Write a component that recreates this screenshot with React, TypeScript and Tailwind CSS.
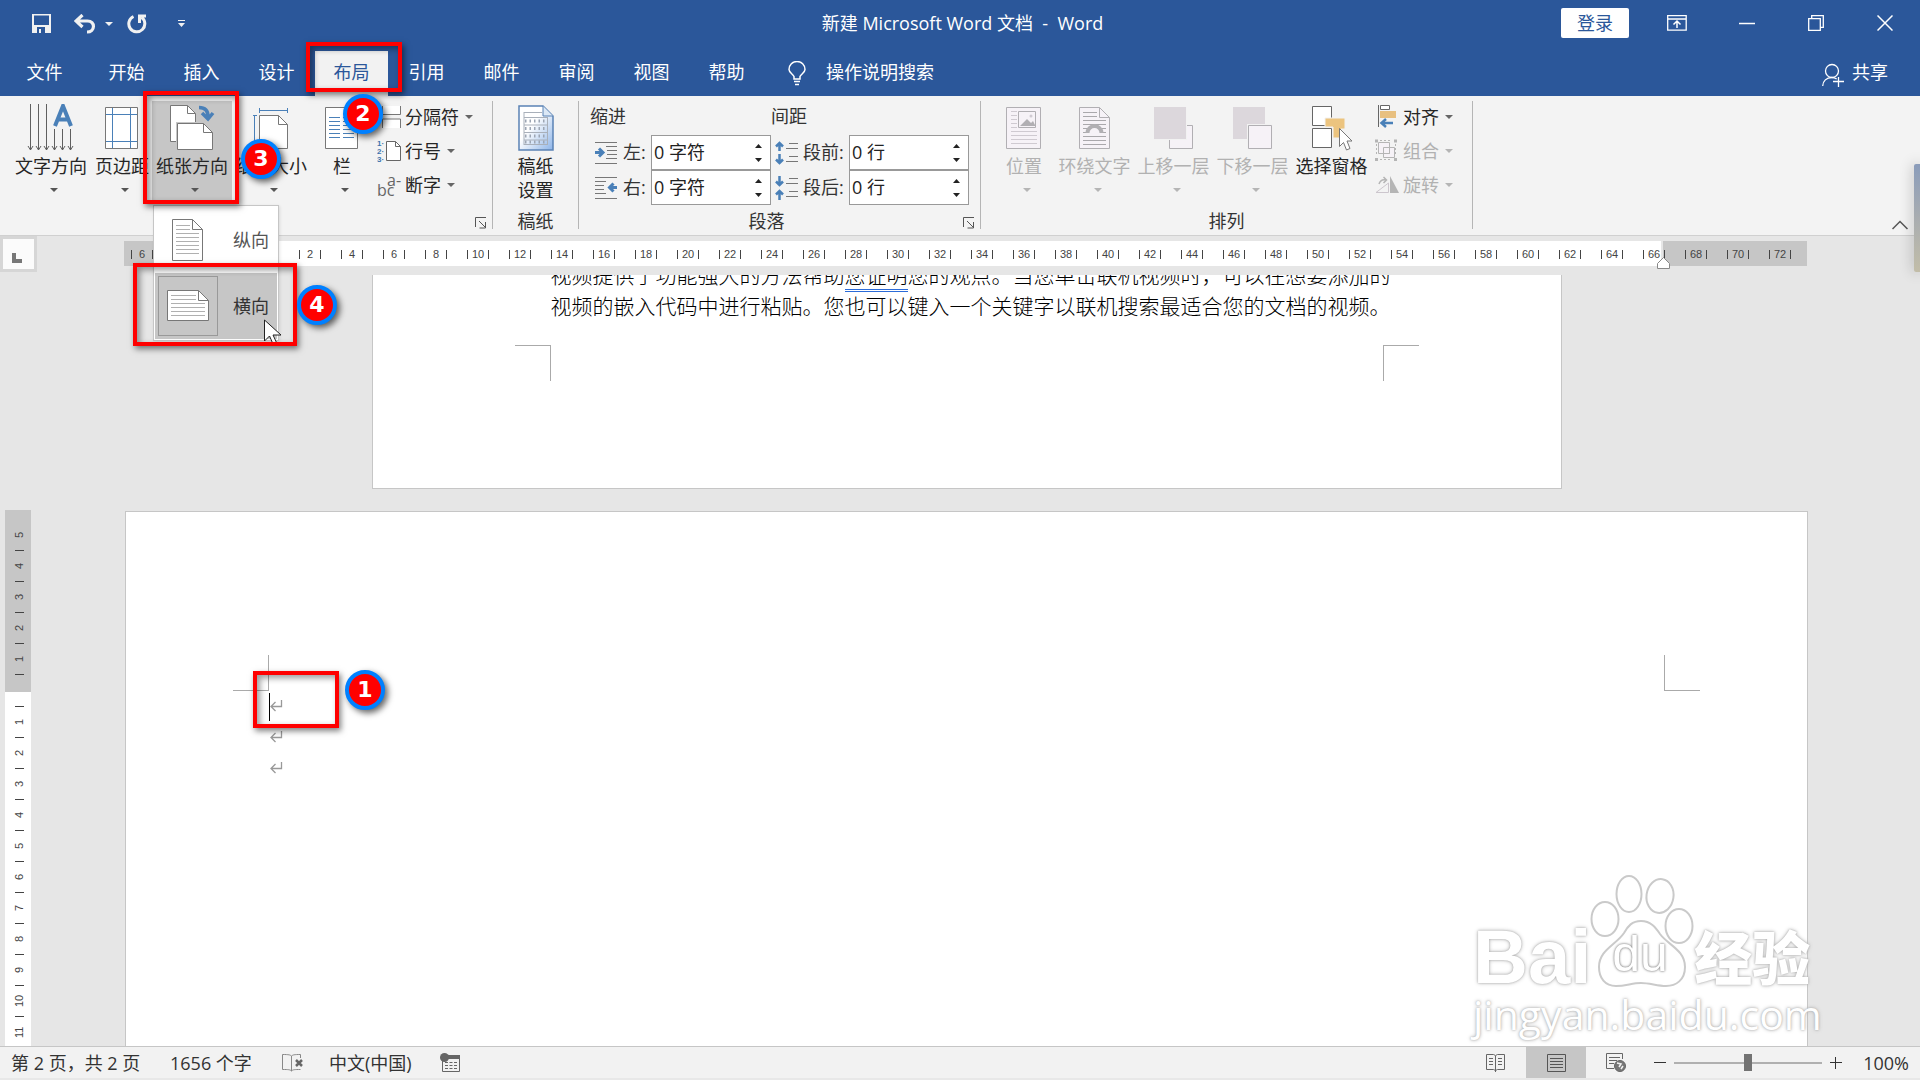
import type { ReactNode } from "react";

const TABS = ["开始", "插入", "设计", "布局", "引用", "邮件", "审阅", "视图", "帮助"];
const LEFT_MARGIN_MARKS = [6, 4, 2];
const BODY_MARKS = Array.from({ length: 33 }, (_, i) => (i + 1) * 2);
const RIGHT_MARGIN_MARKS = [68, 70, 72];
const TOP_MARKS = [5, 4, 3, 2, 1];
const SIDE_MARKS = Array.from({ length: 11 }, (_, i) => i + 1);

/* ── Small shared pieces ─────────────────────────────── */

function Caret({ className = "text-[#666]" }: { className?: string }) {
  return (
    <svg width="8" height="4" viewBox="0 0 8 4" className={`shrink-0 ${className}`} aria-hidden="true">
      <path d="M0 0h8L4 4z" fill="currentColor" />
    </svg>
  );
}

function BigButton({
  label,
  icon,
  className,
  disabled,
  caret = true,
}: {
  label: string;
  icon: ReactNode;
  className: string;
  disabled?: boolean;
  caret?: boolean;
}) {
  return (
    <button
      disabled={disabled}
      className={`flex h-[103px] shrink-0 flex-col items-center whitespace-nowrap ${disabled ? "text-[#b1b1b1]" : "text-[#262626]"} ${className}`}
    >
      <span className="flex h-[53px] items-center pt-px">{icon}</span>
      <span className="text-lg leading-6">{label}</span>
      {caret && <Caret className={disabled ? "ml-[6px] mt-[10px] text-[#b5b5b5]" : "ml-[6px] mt-[10px] text-[#555]"} />}
    </button>
  );
}

function SmallButton({ label, icon, disabled }: { label: string; icon: ReactNode; disabled?: boolean }) {
  return (
    <button
      disabled={disabled}
      className={`flex h-[34px] items-center whitespace-nowrap pb-[3px] text-lg leading-6 ${disabled ? "text-[#b1b1b1]" : "text-[#262626]"}`}
    >
      <span className="mr-1 w-6">{icon}</span>
      {label}
      <span className="ml-[6px]">
        <Caret className={disabled ? "text-[#b5b5b5]" : "text-[#666]"} />
      </span>
    </button>
  );
}

function Group({ label, launcher, className = "", children }: { label?: string; launcher?: boolean; className?: string; children: ReactNode }) {
  return (
    <section className={`relative mt-[5px] flex h-32 shrink-0 flex-col border-r border-[#b5b5b5] ${className}`}>
      <div className="flex h-[108px]">{children}</div>
      <div className={`h-5 text-center text-lg leading-6 text-[#333] ${launcher ? "pr-[26px]" : ""}`}>{label}</div>
      {launcher && (
        <button aria-label="对话框启动器" className="absolute bottom-0 right-[5px]">
          <svg width="12" height="12" viewBox="0 0 12 12" fill="none" stroke="#555">
            <path d="M.5 10V.5H11M4 4l6.500 6.500M10.500 5v6h-6" />
          </svg>
        </button>
      )}
    </section>
  );
}

function SpinBox({ id, label, value, icon, labelClass }: { id: string; label: string; value: string; icon: ReactNode; labelClass: string }) {
  return (
    <div className="flex h-[35px] items-center">
      <span className="w-[28px]">{icon}</span>
      <label htmlFor={id} className={`whitespace-nowrap pb-[2px] text-lg leading-6 text-[#333] ${labelClass}`}>
        {label}
      </label>
      <div className="flex h-[35px] w-[120px] items-center border border-[#999] bg-white">
        <input id={id} defaultValue={value} className="min-w-0 flex-1 bg-transparent pb-[2px] pl-[2px] text-lg leading-6 text-[#222] outline-none" />
        <div className="mr-2 flex flex-col gap-[10px]">
          <button aria-label={`${label}增加`}>
            <svg width="7" height="4" viewBox="0 0 7 4" className="block"><path d="M0 4h7L3.500 0z" fill="#222" /></svg>
          </button>
          <button aria-label={`${label}减少`}>
            <svg width="7" height="4" viewBox="0 0 7 4" className="block"><path d="M0 0h7L3.500 4z" fill="#222" /></svg>
          </button>
        </div>
      </div>
    </div>
  );
}

function RedBox({ className }: { className: string }) {
  return (
    <div
      className={`pointer-events-none absolute z-30 border-4 border-[#ff0000] shadow-[2px_3px_6px_rgba(0,0,0,0.5),inset_3px_3px_6px_rgba(0,0,0,0.4)] ${className}`}
    />
  );
}

function Step({ n, className }: { n: number; className: string }) {
  return (
    <div
      className={`pointer-events-none absolute z-40 flex size-10 items-center justify-center rounded-full border-4 border-[#0080ff] bg-[#ff0000] font-['DejaVu_Sans',sans-serif] text-[22px] font-bold leading-none text-white shadow-[3px_3px_6px_rgba(0,0,0,0.6)] ${className}`}
    >
      {n}
    </div>
  );
}

/* ── Icons ───────────────────────────────────────────── */

const TextDirectionIcon = () => (
  <svg width="48" height="48" viewBox="0 0 48 48" fill="none">
    <path
      d="M3.500 0v46M1 42l2.500 4L6 42M11.500 0v46M9 42l2.500 4 2.500-4M19.500 0v46M17 42l2.500 4 2.500-4M27.500 25v21M25 42l2.500 4 2.500-4M35.500 25v21M33 42l2.500 4 2.500-4M43.500 25v21M41 42l2.500 4 2.500-4"
      stroke="#5f5f5f"
    />
    <path d="M28 22L36 2l8 20M31 15.500h10" stroke="#4a80b8" strokeWidth="4" />
  </svg>
);

const MarginsIcon = () => (
  <svg width="34" height="44" viewBox="0 0 34 44" fill="none">
    <path d="M.5 1.500h32v41H.5z" fill="#fff" stroke="#777" />
    <path d="M7.500 2v40M25.500 2v40M1 8.500h31M1 35.500h31" stroke="#4a80b8" />
  </svg>
);

const OrientationIcon = () => (
  <svg width="46" height="46" viewBox="0 0 46 46" fill="none">
    <path d="M1.500.5h17l8 8v28h-25z" fill="#fff" stroke="#777" />
    <path d="M18.500.5v8h8" stroke="#777" />
    <path d="M7 17h38v30H7z" fill="#c6c6c6" />
    <path d="M8.500 18.500h26l9 9v17h-35z" fill="#fff" stroke="#777" />
    <path d="M34.500 18.500v9h9" stroke="#777" />
    <path d="M30 2.500c6 0 9 3 9 9M33 8l6 6 5-6" stroke="#4a80b8" strokeWidth="3.500" />
  </svg>
);

const SizeIcon = () => (
  <svg width="36" height="44" viewBox="0 0 36 44" fill="none">
    <path d="M6.500 9.500h19l9 9v24h-28z" fill="#fff" stroke="#777" />
    <path d="M25.500 9.500v9h9" stroke="#777" />
    <path d="M6 4.500h29M6.500 2v5M34.500 2v5M1.500 10v32M-1 9.500h5M-1 42.500h5" stroke="#4a80b8" />
  </svg>
);

const ColumnsIcon = () => (
  <svg width="34" height="44" viewBox="0 0 34 44" fill="none">
    <path d="M.5 1.500h32v41H.5z" fill="#fff" stroke="#777" />
    <path d="M4 11.500h11M4 15.500h11M4 19.500h11M4 23.500h11M4 27.500h11M4 31.500h11M18 11.500h11M18 15.500h11M18 19.500h11M18 23.500h11M18 27.500h11M18 31.500h11" stroke="#4a80b8" />
  </svg>
);

const BreaksIcon = () => (
  <svg width="24" height="22" viewBox="0 0 24 22" fill="none" stroke="#777">
    <path d="M6 0h18v8H6zM6 13h18v9H6z" fill="#fff" stroke="none" />
    <path d="M5.500 0v8.500h18V0M5.500 22v-9h18v9" />
  </svg>
);

const LineNumberIcon = () => (
  <svg width="24" height="22" viewBox="0 0 24 22" fill="none">
    <path d="M9.500 1.500h9l5 5v14h-14z" fill="#fff" stroke="#666" />
    <path d="M18.500 1.500v5h5" stroke="#666" />
    <g fill="#3f73ad" fontSize="8" fontWeight="700" fontFamily="Liberation Sans, sans-serif">
      <text x="0" y="6">1·</text>
      <text x="0" y="14">2·</text>
      <text x="0" y="22">3·</text>
    </g>
  </svg>
);

const HyphenIcon = () => (
  <span className="relative block h-6 font-['Open_Sans',sans-serif] text-base leading-4 text-[#666]">
    <span className="absolute left-0 top-[9px]">bc</span>
    <span className="absolute left-[10px] -top-[1px]">a-</span>
  </span>
);

const GridPaperIcon = () => (
  <svg width="36" height="46" viewBox="0 0 36 46" fill="none">
    <defs>
      <linearGradient id="paper" x1="0" y1="0" x2="1" y2="1">
        <stop offset=".4" stopColor="#fff" />
        <stop offset="1" stopColor="#8db4e8" />
      </linearGradient>
    </defs>
    <path d="M1 1h24l10 10v34H1z" fill="url(#paper)" stroke="#5b83b5" strokeWidth="1.500" />
    <path d="M25 1v10h10" fill="#dbe8f6" stroke="#5b83b5" />
    <path d="M6 7.500h18M6 12.500h24M6 20h24M6 27.500h24M6 35h24M6 39.500h24M6 7v33M29.500 12v28" stroke="#a9b0ba" />
    <path d="M7 16h22M7 23.500h22M7 31h22M7 37h22" stroke="#9ca5b3" strokeWidth="3" strokeDasharray="1.500 3" />
  </svg>
);

function IndentIcon({ right }: { right?: boolean }) {
  return (
    <svg width="23" height="22" viewBox="0 0 23 22" fill="none">
      {right ? (
        <>
          <path d="M0 .5h22M0 4.500h11M0 8.500h9M0 12.500h9M0 16.500h11M0 21.500h22" stroke="#777" />
          <path d="M22 10.500h-7M18.500 6.500l-4 4 4 4" stroke="#4a80b8" strokeWidth="3" />
        </>
      ) : (
        <>
          <path d="M0 .5h22M11 4.500h11M12 8.500h10M12 12.500h10M11 16.500h11M0 21.500h22" stroke="#777" />
          <path d="M0 10.500h7M4 6.500l4 4-4 4" stroke="#4a80b8" strokeWidth="3" />
        </>
      )}
    </svg>
  );
}

function SpacingIcon({ after }: { after?: boolean }) {
  return (
    <svg width="24" height="24" viewBox="0 0 24 24" fill="none">
      <path d="M14 2.500h9M11 7.500h12M14 15.500h9M11 20.500h12" stroke="#777" />
      {after ? (
        <path d="M4.500 0v9M1 5.500L4.500 9 8 5.500M4.500 24v-9M1 18.500L4.500 15 8 18.500" stroke="#4a80b8" strokeWidth="2.500" />
      ) : (
        <path d="M4.500 10V1.500M1 5.500L4.500 2 8 5.500M4.500 13v9M1 18.500L4.500 22 8 18.500" stroke="#4a80b8" strokeWidth="2.500" />
      )}
    </svg>
  );
}

const PositionIcon = () => (
  <svg width="36" height="44" viewBox="0 0 36 44" fill="none">
    <path d="M.5 1.500h34v41H.5z" fill="#f6f2f7" stroke="#b1afb3" />
    <path d="M5 5.500h6M5 9.500h6M5 13.500h6M5 17.500h6M5 21.500h6M5 25.500h26M5 29.500h26M5 33.500h26M5 37.500h26" stroke="#cfcad1" />
    <path d="M12.500 5.500h17v16h-17z" stroke="#b1afb3" />
    <path d="M14 20l7-7 4 4 2-2 2 4v1z" fill="#b1afb3" />
    <circle cx="25" cy="10" r="1.500" fill="#cfcad1" />
  </svg>
);

const WrapIcon = () => (
  <svg width="32" height="44" viewBox="0 0 32 44" fill="none">
    <path d="M.5 1.500h20l10 10v31H.5z" fill="#f6f2f7" stroke="#b1afb3" />
    <path d="M20.500 1.500v10h10" stroke="#b1afb3" />
    <path d="M4 6.500h14M4 10.500h14M4 14.500h23M4 18.500h23M4 22.500h5M22 22.500h5M4 26.500h3M24 26.500h3M4 30.500h23M4 34.500h23M4 38.500h23" stroke="#aaa8ac" />
    <path d="M8.500 27a7 7 0 0 1 14 0" stroke="#b1afb3" strokeWidth="4" />
  </svg>
);

function LayerIcon({ back }: { back?: boolean }) {
  return (
    <svg width="40" height="44" viewBox="0 0 40 44" fill="none">
      {back ? (
        <>
          <path d="M0 1h32v32H0z" fill="#dcd7dc" />
          <path d="M14 18h26v26H14z" fill="#f2f2f2" />
          <path d="M15.500 19.500h23v23h-23z" fill="#f6f2f7" stroke="#b1afb3" />
        </>
      ) : (
        <>
          <path d="M15.500 19.500h23v23h-23z" fill="#f6f2f7" stroke="#b1afb3" />
          <path d="M0 1h33v33H0z" fill="#f2f2f2" />
          <path d="M0 1h32v32H0z" fill="#dcd7dc" />
        </>
      )}
    </svg>
  );
}

const SelectionPaneIcon = () => (
  <svg width="42" height="46" viewBox="0 0 42 46" fill="none">
    <path d="M1.500 1.500h19v19h-19zM1.500 23.500h19v19h-19z" fill="#fff" stroke="#666" />
    <path d="M14 13h20v11h-4v9h-8V22h-8z" fill="#ecc47f" stroke="#f2f2f2" />
    <path d="M28.500 23.500v18l4-4 3 7.500 3.500-1.500-3-7.500h5z" fill="#fff" stroke="#777" />
  </svg>
);

const AlignIcon = () => (
  <svg width="23" height="23" viewBox="0 0 23 23" fill="none">
    <path d="M3.500 0v22" stroke="#666" />
    <path d="M5.500.5h9v4h-9z" fill="#fff" stroke="#666" />
    <path d="M5 6h16v7H5z" fill="#e8c080" />
    <path d="M18 18H7M11 14l-4.500 4 4.500 4" stroke="#4a80b8" strokeWidth="2.500" />
  </svg>
);

const GroupIcon = () => (
  <svg width="23" height="23" viewBox="0 0 23 23" fill="none" stroke="#b5b5b5">
    <path d="M3.500 3.500h11v11h-11zM8.500 8.500h11v10h-11z" fill="#f6f2f7" />
    <path d="M14.500 8.500v6h-6" />
    <path d="M0 .500h3v3H0zM19 .500h3v3h-3zM0 19h3v3H0zM19 19h3v3h-3z" fill="#b5b5b5" stroke="none" />
    <path d="M1.500 5v12M20.500 5v12M5 1.500h12M5 20.500h12" strokeDasharray="2 2" />
  </svg>
);

const RotateIcon = () => (
  <svg width="24" height="18" viewBox="0 0 24 18" fill="none">
    <path d="M1 16.500L13.500 7v9.500z" stroke="#ccc6cd" />
    <path d="M15 0l9 17h-9z" fill="#b5b5b5" />
    <path d="M4 8c1-3 3-5 7-4M8.500 1l3 3-3 3" stroke="#b5b5b5" strokeWidth="1.500" />
  </svg>
);

const PortraitIcon = () => (
  <svg width="32" height="44" viewBox="0 0 32 44" fill="none">
    <path d="M.5 1.500h20l10 10v31H.5z" fill="#fff" stroke="#777" />
    <path d="M20.500 1.500v10h10" stroke="#777" />
    <path d="M4 7.500h14M4 11.500h14M4 15.500h23M4 19.500h23M4 23.500h23M4 27.500h23M4 31.500h23M4 35.500h23" stroke="#b0b0b0" />
  </svg>
);

const LandscapeIcon = () => (
  <svg width="42" height="32" viewBox="0 0 42 32" fill="none">
    <path d="M.5.5h31l10 10v20H.5z" fill="#fff" stroke="#777" />
    <path d="M31.500.5v10h10" stroke="#777" />
    <path d="M4 5.500h25M4 9.500h25M4 13.500h34M4 17.500h34M4 21.500h34M4 25.500h34" stroke="#b0b0b0" />
  </svg>
);

const ReturnMark = () => (
  <svg width="13" height="12" viewBox="0 0 13 12" fill="none" stroke="#999" className="block">
    <path d="M11.500 0v6.500H1M5.500 2L1 6.500 5.500 11" strokeWidth="1.300" />
  </svg>
);

/* ── Title bar and tabs ──────────────────────────────── */

function TitleBar() {
  return (
    <header className="flex h-12 shrink-0 items-center pb-[2px] text-white">
      <div className="flex flex-1 items-center pl-8 pt-[2px]">
        <button aria-label="保存">
          <svg width="20" height="20" viewBox="0 0 20 20" className="block">
            <path d="M0 0h19v19H0zM2 1.500V11h15V1.500zM5 13v6h2v-4h2v4h4v-6z" fill="#f1f1f1" fillRule="evenodd" />
          </svg>
        </button>
        <button aria-label="撤消" className="ml-[22px] flex items-center gap-[9px]">
          <svg width="22" height="20" viewBox="0 0 22 20" fill="none" stroke="#f1f1f1" strokeWidth="3.200">
            <path d="M8.500 1L2 7l6.500 6M2 7h11.500c8 0 8 11-.5 11" />
          </svg>
          <Caret className="text-[#f1f1f1]" />
        </button>
        <button aria-label="重复" className="ml-[14px]">
          <svg width="20" height="20" viewBox="0 0 20 20" fill="none" stroke="#f1f1f1" strokeWidth="3">
            <path d="M6.500 2.500a8 8 0 1 0 8 .8M19 2h-6.500v7" />
          </svg>
        </button>
        <button aria-label="自定义快速访问工具栏" className="ml-[31px]">
          <svg width="8" height="8" viewBox="0 0 8 8" fill="#f1f1f1" className="block">
            <path d="M0 0h7v1H0zM0 3h7L3.500 7z" />
          </svg>
        </button>
      </div>
      <h1 className="whitespace-pre text-lg font-normal leading-6">新建 Microsoft Word 文档  -  Word</h1>
      <div className="flex flex-1 items-center justify-end pr-[27px]">
        <button className="h-[30px] w-[68px] rounded-[2px] bg-white text-lg leading-6 text-[#2b579a]">登录</button>
        <button aria-label="功能区显示选项" className="ml-[38px]">
          <svg width="20" height="16" viewBox="0 0 20 16" fill="none" stroke="#fff" className="block">
            <path d="M.7.7h18.500v14.500H.7zM1 4h18" strokeWidth="1.300" />
            <path d="M10 13V6.500M6.500 9.500L10 6l3.500 3.500" strokeWidth="1.500" />
          </svg>
        </button>
        <button aria-label="最小化" className="ml-[52px]">
          <svg width="16" height="16" viewBox="0 0 16 16" stroke="#fff" className="block"><path d="M0 8.500h16" strokeWidth="1.500" /></svg>
        </button>
        <button aria-label="还原" className="ml-[53px]">
          <svg width="16" height="16" viewBox="0 0 16 16" fill="none" stroke="#fff" strokeWidth="1.300" className="block">
            <path d="M.7 3.700h11.600v11.600H.7zM3.700 3.500V.7h11.600v11.600h-3" />
          </svg>
        </button>
        <button aria-label="关闭" className="ml-[53px]">
          <svg width="16" height="16" viewBox="0 0 16 16" stroke="#fff" strokeWidth="1.500" className="block"><path d="M.5.5l15 15M15.500.5l-15 15" /></svg>
        </button>
      </div>
    </header>
  );
}

function TabBar() {
  return (
    <nav className="flex h-12 shrink-0 items-end text-lg leading-6 text-white">
      <button className="h-[45px] w-[89px] pb-[3px]">文件</button>
      {TABS.map((tab) => (
        <button key={tab} className={tab === "布局" ? "mx-px h-[45px] w-[73px] bg-[#f2f2f2] pb-[3px] text-[#2b579a]" : "h-[45px] w-[75px] pb-[3px]"}>
          {tab}
        </button>
      ))}
      <button className="ml-6 flex h-[45px] items-center gap-5 pb-[3px]">
        <svg width="18" height="25" viewBox="0 0 18 25" fill="none" stroke="#fff" strokeWidth="1.500" className="mt-[2px]">
          <path d="M6 18v-2.500C5 13 1 11.500 1 8.500a8 8 0 0 1 16 0c0 3-4 4.500-5 7V18zM6 20.500h6M7 23.500h4" />
        </svg>
        操作说明搜索
      </button>
      <button className="ml-auto mr-8 flex h-[45px] items-center gap-2 pb-[3px]">
        <svg width="22" height="24" viewBox="0 0 22 24" fill="none" stroke="#fff" strokeWidth="1.300" className="mt-[6px]">
          <circle cx="10" cy="8" r="6.500" />
          <path d="M.7 23c0-5 4-8.500 9-8.500 2 0 3.500.5 5 1.500M16.500 14v10M11 18.500h11" />
        </svg>
        共享
      </button>
    </nav>
  );
}

/* ── Ribbon ──────────────────────────────────────────── */

function OrientationMenu() {
  return (
    <div role="menu" className="absolute left-px top-[104px] z-20 w-[126px] border border-[#c6c6c6] bg-white p-px shadow-[1px_1px_3px_rgba(0,0,0,0.1)]">
      <button role="menuitem" className="flex h-[66px] w-full items-center pl-[3px] text-lg leading-6 text-[#555]">
        <span className="flex size-[60px] items-center justify-center"><PortraitIcon /></span>
        <span className="ml-[15px]">纵向</span>
      </button>
      <button role="menuitem" className="flex h-[66px] w-full items-center bg-[#c6c6c6] pl-[3px] text-lg leading-6 text-[#333]">
        <span className="flex size-[60px] items-center justify-center border border-[#999]"><LandscapeIcon /></span>
        <span className="ml-[15px]">横向</span>
      </button>
      <svg width="20" height="26" viewBox="0 0 20 26" className="absolute -right-[5px] top-[113px]">
        <path d="M1.500 1v21l5-5 3.500 8 3.500-1.500L10 16h8z" fill="#fff" stroke="#222" />
      </svg>
    </div>
  );
}

function Ribbon() {
  return (
    <div className="flex h-[140px] shrink-0 border-b border-[#d0d0d0] bg-[#f3f3f3]">
      <Group launcher className="w-[493px]">
        <BigButton label="文字方向" icon={<TextDirectionIcon />} className="ml-2 w-[86px]" />
        <BigButton label="页边距" icon={<MarginsIcon />} className="w-14" />
        <div className="relative ml-[2px]">
          <BigButton label="纸张方向" icon={<OrientationIcon />} className="w-20 bg-[#c6c6c6]" />
          <OrientationMenu />
        </div>
        <BigButton label="纸张大小" icon={<SizeIcon />} className="w-[78px]" />
        <BigButton label="栏" icon={<ColumnsIcon />} className="w-16" />
        <div className="ml-[3px]">
          <SmallButton label="分隔符" icon={<BreaksIcon />} />
          <SmallButton label="行号" icon={<LineNumberIcon />} />
          <SmallButton label="断字" icon={<HyphenIcon />} />
        </div>
      </Group>

      <Group label="稿纸" className="w-[86px]">
        <button className="flex flex-1 flex-col items-center text-lg leading-6 text-[#262626]">
          <span className="flex h-[53px] items-center pt-px"><GridPaperIcon /></span>
          <span>稿纸</span>
          <span>设置</span>
        </button>
      </Group>

      <Group label="段落" launcher className="w-[402px]">
        <div className="ml-[11px] w-[181px]">
          <h2 className="h-[34px] text-lg leading-[31px] text-[#333]">缩进</h2>
          <div className="pl-[5px]">
            <SpinBox id="indent-left" label="左:" value="0 字符" icon={<IndentIcon />} labelClass="w-7" />
            <SpinBox id="indent-right" label="右:" value="0 字符" icon={<IndentIcon right />} labelClass="w-7" />
          </div>
        </div>
        <div>
          <h2 className="h-[34px] text-lg leading-[31px] text-[#333]">间距</h2>
          <div className="pl-1">
            <SpinBox id="space-before" label="段前:" value="0 行" icon={<SpacingIcon />} labelClass="w-[46px]" />
            <SpinBox id="space-after" label="段后:" value="0 行" icon={<SpacingIcon after />} labelClass="w-[46px]" />
          </div>
        </div>
      </Group>

      <Group label="排列" className="w-[492px]">
        <BigButton disabled label="位置" icon={<PositionIcon />} className="ml-3 w-[62px]" />
        <BigButton disabled label="环绕文字" icon={<WrapIcon />} className="w-[79px]" />
        <BigButton disabled label="上移一层" icon={<LayerIcon />} className="w-[79px]" />
        <BigButton disabled label="下移一层" icon={<LayerIcon back />} className="w-[79px]" />
        <BigButton label="选择窗格" icon={<SelectionPaneIcon />} className="w-[79px]" caret={false} />
        <div className="ml-1">
          <SmallButton label="对齐" icon={<AlignIcon />} />
          <SmallButton disabled label="组合" icon={<GroupIcon />} />
          <SmallButton disabled label="旋转" icon={<RotateIcon />} />
        </div>
      </Group>

      <button aria-label="折叠功能区" className="mb-[5px] ml-auto mr-3 self-end">
        <svg width="16" height="10" viewBox="0 0 16 10" fill="none" stroke="#555" strokeWidth="1.500" className="block">
          <path d="M.5 9L8 1.500 15.500 9" />
        </svg>
      </button>
    </div>
  );
}

/* ── Rulers ──────────────────────────────────────────── */

function RulerMark({ n }: { n: number }) {
  return (
    <span className="flex w-[42px] shrink-0 items-center justify-center pt-[2px]">
      <i className="h-[9px] w-px bg-[#444]" />
      <span className="w-5 text-center">{n}</span>
      <i className="h-[9px] w-px bg-[#444]" />
    </span>
  );
}

function HorizontalRuler() {
  return (
    <div className="flex h-[39px] shrink-0 font-['Liberation_Sans',Arial,sans-serif] text-[11px] text-[#444]">
      <button aria-label="制表符" className="h-9 w-[37px] border-[3px] border-[#d6d6d6] bg-[#fbfbfb] pl-[9px] pt-2">
        <svg width="10" height="10" viewBox="0 0 10 10"><path d="M0 0h4v6h6v4H0z" fill="#777" /></svg>
      </button>
      <div className="flex flex-1 justify-center pr-[26px] pt-[5px]">
        <div className="flex h-[25px] w-[144px] justify-end overflow-hidden bg-[#c6c6c6] pr-[21px]">
          {LEFT_MARGIN_MARKS.map((n) => <RulerMark key={n} n={n} />)}
        </div>
        <div className="relative z-10 flex h-[25px] w-[1393px] bg-white pl-[21px]">
          {BODY_MARKS.map((n) => <RulerMark key={n} n={n} />)}
          <svg width="13" height="12" viewBox="0 0 13 12" className="absolute -right-[9px] top-4">
            <path d="M.5 6.500l6-6 6 6v5H.5z" fill="#fff" stroke="#888" />
          </svg>
        </div>
        <div className="ml-[2px] flex h-[25px] w-[144px] bg-[#c6c6c6] pl-3">
          {RIGHT_MARGIN_MARKS.map((n) => <RulerMark key={n} n={n} />)}
        </div>
      </div>
    </div>
  );
}

function VerticalRuler() {
  return (
    <div className="ml-[5px] mr-[6px] mt-[235px] flex w-[26px] shrink-0 flex-col overflow-hidden font-['Liberation_Sans',Arial,sans-serif] text-[11px] leading-[12px] text-[#444]">
      <div className="h-[182px] shrink-0 bg-[#c6c6c6] pt-[10px]">
        {TOP_MARKS.map((n) => (
          <div key={n} className="flex h-[31px] flex-col items-center pl-[2px]">
            <span className="flex h-[30px] rotate-180 items-center justify-center [writing-mode:vertical-rl]">{n}</span>
            <i className="h-px w-[9px] shrink-0 bg-[#444]" />
          </div>
        ))}
      </div>
      <div className="min-h-0 flex-1 bg-white pt-[14px]">
        {SIDE_MARKS.map((n) => (
          <div key={n} className="flex h-[31px] flex-col items-center pl-[2px]">
            <i className="h-px w-[9px] shrink-0 bg-[#444]" />
            <span className="flex h-[30px] rotate-180 items-center justify-center [writing-mode:vertical-rl]">{n}</span>
          </div>
        ))}
      </div>
    </div>
  );
}

/* ── Pages ───────────────────────────────────────────── */

function Pages() {
  return (
    <div className="flex min-w-0 flex-1 flex-col items-center overflow-hidden pr-6">
      <article className="h-[214px] w-[1190px] shrink-0 overflow-hidden border-x border-b border-[#c6c6c6] bg-white">
        <div className="-mt-4 whitespace-nowrap pl-[178px] font-['Noto_Sans_CJK_SC',sans-serif] text-[21px] font-light leading-[31px] text-black">
          <p>
            视频提供了功能强大的方法帮助
            <span className="border-b-[3px] border-double border-[#2b6bd8]">您证明</span>
            您的观点。当您单击联机视频时，可以在想要添加的
          </p>
          <p>视频的嵌入代码中进行粘贴。您也可以键入一个关键字以联机搜索最适合您的文档的视频。</p>
        </div>
        <div className="mt-6 flex justify-between px-[142px]">
          <i className="size-9 border-r border-t border-[#aaa]" />
          <i className="size-9 border-l border-t border-[#aaa]" />
        </div>
      </article>

      <article className="mt-[22px] min-h-0 w-[1683px] flex-1 border-x border-t border-[#c6c6c6] bg-white px-[107px] pt-[143px]">
        <div className="flex justify-between">
          <i className="size-9 border-b border-r border-[#aaa]" />
          <i className="size-9 border-b border-l border-[#aaa]" />
        </div>
        <div className="flex flex-col gap-[3px] pl-9 pt-[2px]">
          <p className="flex h-7 items-center border-l border-black pb-[2px]"><ReturnMark /></p>
          <p className="flex h-7 items-center pb-[2px] pl-px"><ReturnMark /></p>
          <p className="flex h-7 items-center pb-[2px] pl-px"><ReturnMark /></p>
        </div>
      </article>
    </div>
  );
}

function Watermark() {
  return (
    <div className="pointer-events-none absolute bottom-10 right-[100px] z-10 w-[347px] text-white [text-shadow:0_0_2px_#aaa,0_0_4px_#bbb]">
      <div className="flex items-end">
        <span className="font-['Liberation_Sans',sans-serif] text-[76px] font-bold leading-[62px]">Bai</span>
        <div className="relative -ml-px h-[114px] w-[104px]">
          <svg width="104" height="114" viewBox="0 0 104 114" fill="#fff" stroke="#cacaca" strokeWidth="2">
            <ellipse cx="15" cy="45" rx="13.500" ry="17" />
            <ellipse cx="39" cy="20" rx="12.500" ry="18" />
            <ellipse cx="70" cy="22" rx="13.500" ry="17" transform="rotate(8 70 22)" />
            <ellipse cx="89" cy="52" rx="13.500" ry="17" />
            <path d="M51 47c10 0 15 7 19 13 8 11 25 16 25 33 0 13-9 19-19 19-9 0-16-3-25-3s-15 3-25 3C15 112 9 104 9 93c0-17 17-22 25-34 4-7 8-12 17-12z" />
          </svg>
          <span className="absolute left-[22px] top-[55px] font-['Liberation_Sans',sans-serif] text-[50px] leading-[50px] [text-shadow:0_0_2px_#888,0_0_3px_#999]">du</span>
        </div>
        <span className="font-['Noto_Sans_CJK_SC',sans-serif] text-[58px] font-black leading-[66px]">经验</span>
      </div>
      <div className="whitespace-nowrap text-[41px] leading-[52px]">jingyan.baidu.com</div>
    </div>
  );
}

/* ── Status bar ──────────────────────────────────────── */

function StatusBar() {
  return (
    <footer className="flex h-[34px] shrink-0 items-center whitespace-nowrap border-b-2 border-t border-b-[#e8e8e8] border-t-[#c6c6c6] bg-[#f2f2f2] pl-[11px] text-lg leading-6 text-[#333]">
      <span className="w-[159px]">第 2 页，共 2 页</span>
      <span className="w-28">1656 个字</span>
      <button aria-label="校对" className="w-[47px]">
        <svg width="22" height="18" viewBox="0 0 22 18" fill="none" stroke="#888" className="block">
          <path d="M9.500 17V2C8 .8 7 .5.5.5v15c6 0 7.500 0 9 1.500 1.500-1.500 3-1.500 9-1.500M9.500 2C11 .8 12 .5 18.500.5V4" />
          <path d="M14 6l6 6M20 6l-6 6" stroke="#666" strokeWidth="2.500" />
        </svg>
      </button>
      <span className="w-[111px]">中文(中国)</span>
      <button aria-label="宏录制">
        <svg width="21" height="19" viewBox="0 0 21 19" fill="none" className="block">
          <path d="M2.500 5v13.500h17V2" stroke="#666" />
          <path d="M8 2h12v4H8z" fill="#666" />
          <circle cx="4.500" cy="4.500" r="4.500" fill="#666" />
          <path d="M5 9.500h12M5 12.500h12M5 15.500h12" stroke="#666" strokeDasharray="3 1.500" />
        </svg>
      </button>

      <button aria-label="阅读视图" className="ml-auto flex h-full w-[60px] items-center justify-center">
        <svg width="20" height="18" viewBox="0 0 20 18" fill="none" stroke="#666">
          <path d="M9.500 2v16M9.500 16.500L7.500 15.500H.5V.5h7l2 1 2-1h7v15h-7zM3 4.500h4M3 7.500h4M3 10.500h4M12 4.500h4M12 7.500h4M12 10.500h4" />
        </svg>
      </button>
      <button aria-label="页面视图" className="flex h-full w-[60px] items-center justify-center bg-[#c6c6c6]">
        <svg width="19" height="18" viewBox="0 0 19 18" fill="none" stroke="#555">
          <path d="M.5.5h18v17H.5zM3 4.500h13M3 7.500h13M3 10.500h13M3 13.500h13" />
        </svg>
      </button>
      <button aria-label="Web 版式视图" className="flex h-full w-[60px] items-center justify-center">
        <svg width="20" height="19" viewBox="0 0 20 19" fill="none" stroke="#666">
          <path d="M8 15.500H.5V.5h16V6M3 4.500h11M3 7.500h8M3 10.500h5" />
          <circle cx="14" cy="13" r="5.500" fill="#777" />
          <path d="M11 10l4 1-2 3M15 16l2-3" stroke="#f2f2f2" strokeWidth="1.500" />
        </svg>
      </button>
      <button aria-label="缩小" className="ml-2">
        <svg width="12" height="12" viewBox="0 0 12 12" stroke="#333" className="block"><path d="M0 5.500h12" /></svg>
      </button>
      <input
        type="range"
        aria-label="显示比例"
        min={0}
        max={100}
        defaultValue={50}
        className="mx-2 h-[17px] w-[148px] appearance-none bg-[linear-gradient(#b0b0b0,#b0b0b0)] bg-[length:100%_2px] bg-center bg-no-repeat [&::-webkit-slider-thumb]:h-[17px] [&::-webkit-slider-thumb]:w-2 [&::-webkit-slider-thumb]:appearance-none [&::-webkit-slider-thumb]:bg-[#737373]"
      />
      <button aria-label="放大">
        <svg width="12" height="12" viewBox="0 0 12 12" stroke="#333" className="block"><path d="M0 5.500h12M5.500 0v12" /></svg>
      </button>
      <button className="ml-[18px] mr-[11px] w-[49px] text-right">100%</button>
    </footer>
  );
}

export default function App() {
  return (
    <div className="relative flex h-screen flex-col overflow-hidden bg-[#2b579a] font-['Open_Sans','Noto_Sans_CJK_SC',sans-serif]">
      <TitleBar />
      <TabBar />
      <Ribbon />
      <main className="flex min-h-0 flex-1 flex-col bg-[#e6e6e6]">
        <HorizontalRuler />
        <div className="flex min-h-0 flex-1">
          <VerticalRuler />
          <Pages />
        </div>
      </main>
      <StatusBar />
      <Watermark />

      {/* edge of a desktop widget peeking in */}
      <div className="absolute right-0 top-[164px] h-[108px] w-[6px] rounded-l-[2px] bg-linear-to-b from-[#8a9cba] via-[#a9adb0] to-[#c2bda8] shadow-[0_0_14px_rgba(0,0,0,0.3)]" />

      <RedBox className="left-[306px] top-[42px] h-[50px] w-24" />
      <RedBox className="left-[143px] top-[91px] h-[113px] w-24" />
      <RedBox className="left-[133px] top-[263px] h-[83px] w-[164px]" />
      <RedBox className="left-[253px] top-[671px] h-[57px] w-[86px]" />
      <Step n={1} className="left-[345px] top-[670px]" />
      <Step n={2} className="left-[343px] top-[94px]" />
      <Step n={3} className="left-[241px] top-[139px]" />
      <Step n={4} className="left-[297px] top-[285px]" />
    </div>
  );
}
